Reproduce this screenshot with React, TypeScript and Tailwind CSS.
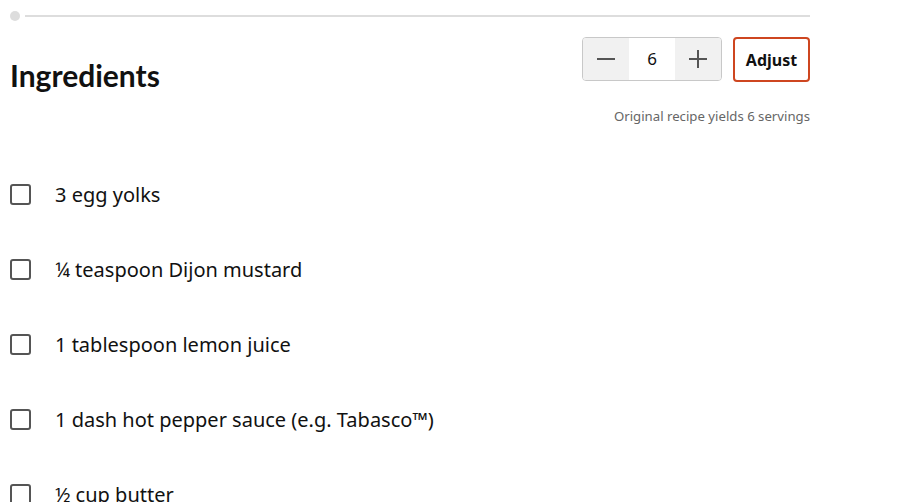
import React from "react";

const items = [
  "3 egg yolks",
  "¼ teaspoon Dijon mustard",
  "1 tablespoon lemon juice",
  "1 dash hot pepper sauce (e.g. Tabasco™)",
  "½ cup butter",
];

export default function App() {
  return (
    <div className="w-[897px] h-[502px] overflow-hidden bg-white" style={{ fontFamily: '"Noto Sans", sans-serif' }}>
      <div className="w-[810px] pl-[10px]">
        <div className="flex items-center h-[32px] gap-[5px]">
          <div className="w-[10px] h-[10px] rounded-full bg-[#dddddd]" />
          <div className="flex-1 h-[2px] bg-[#dddddd]" />
        </div>
        <div className="flex justify-between items-start mt-[5px]">
          <h2 className="mt-[20px] text-[30px] font-bold leading-[36px] text-[#111]" style={{ fontFamily: 'Lato, sans-serif' }}>
            Ingredients
          </h2>
          <div className="flex flex-col items-end">
            <div className="flex gap-[11px]">
              <div className="flex h-[44px] border border-[#c8c8c8] rounded-[4px] overflow-hidden">
                <div className="w-[46px] bg-[#f1f1f1] flex items-center justify-center">
                  <div className="w-[18px] h-[2px] bg-[#555]" />
                </div>
                <div className="w-[46px] bg-white flex items-center justify-center text-[17px] text-[#111]">6</div>
                <div className="w-[46px] bg-[#f1f1f1] flex items-center justify-center relative">
                  <div className="w-[18px] h-[2px] bg-[#555]" />
                  <div className="absolute w-[2px] h-[18px] bg-[#555]" />
                </div>
              </div>
              <div className="w-[77px] h-[45px] border-2 border-[#ce4620] rounded-[4px] flex items-center justify-center text-[16px] font-bold text-[#111]">
                Adjust
              </div>
            </div>
            <div className="mt-[25px] text-[13.2px] text-[#666] leading-[18px]">Original recipe yields 6 servings</div>
          </div>
        </div>
        <div className="mt-[32px] flex flex-col">
          {items.map((t) => (
            <div key={t} className="flex items-center h-[75px]">
              <div className="w-[21px] h-[21px] border-2 border-[#555] rounded-[3px]" />
              <div className="ml-[24px] text-[20px] text-[#111] leading-[28px]">{t}</div>
            </div>
          ))}
        </div>
      </div>
    </div>
  );
}
